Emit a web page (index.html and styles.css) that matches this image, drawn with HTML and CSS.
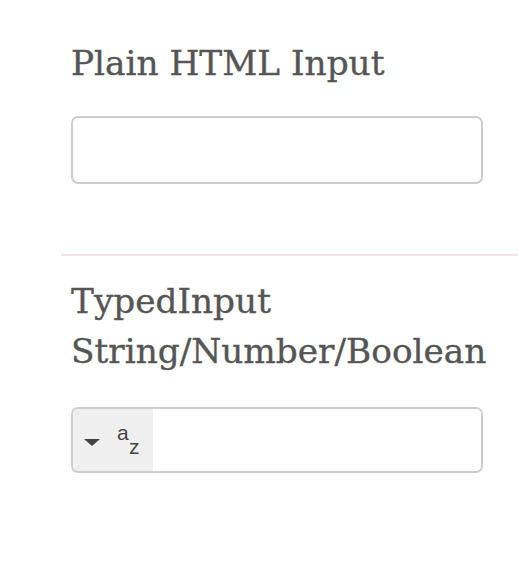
FILE: index.html
```html
<!DOCTYPE html>
<html>
<head>
<meta charset="utf-8">
<link rel="stylesheet" href="styles.css">
</head>
<body>
<div class="page">
  <section class="row first">
    <h3 class="title">Plain HTML Input</h3>
    <input class="field" type="text">
  </section>
  <hr class="divider">
  <section class="row second">
    <h3 class="title">TypedInput<br>String/Number/Boolean</h3>
    <div class="typed">
      <div class="type-btn">
        <svg class="caret" width="16" height="7" viewBox="0 0 16 7"><path d="M0 0 H16 L8 7 Z" fill="#444"/></svg>
        <span class="az"><span class="a">a</span><span class="z">z</span></span>
      </div>
      <input class="typed-field" type="text">
    </div>
  </section>
</div>
</body>
</html>
```
FILE: styles.css
```css
html, body {
  margin: 0;
  padding: 0;
  background: #fff;
}
.page {
  padding: 38px 0 0 61px;
}
.row {
  padding-left: 10px;
  padding-right: 35px;
}
.title {
  margin: 0;
  font-family: "DejaVu Serif", serif;
  font-weight: normal;
  font-size: 34.3px;
  line-height: 50px;
  color: #555;
  -webkit-text-stroke: 0.35px #555;
  white-space: nowrap;
}
.field {
  display: block;
  box-sizing: border-box;
  width: 412px;
  height: 68px;
  margin: 28px 0 0 0;
  border: 2px solid #ccc;
  border-radius: 7px;
  background: #fff;
  outline: none;
}
.divider {
  border: none;
  border-top: 2px solid #f3e2e6;
  margin: 70px 0 20px 0;
}
.typed {
  box-sizing: border-box;
  width: 412px;
  height: 66px;
  margin-top: 31px;
  border: 2px solid #ccc;
  border-radius: 7px;
  display: flex;
  overflow: hidden;
}
.type-btn {
  width: 80px;
  background: #efefef;
  display: flex;
  align-items: flex-start;
  box-sizing: border-box;
}
.caret {
  display: block;
  margin: 30px 0 0 11px;
}
.az {
  margin-left: 15px;
  position: relative;
  width: 28px;
  height: 62px;
  font-family: "Liberation Sans", sans-serif;
  font-size: 21px;
  line-height: 12px;
  color: #444;
}
.az .a {
  position: absolute;
  left: 2px;
  top: 18px;
}
.az .z {
  position: absolute;
  left: 14px;
  top: 32px;
}
.typed-field {
  flex: 1;
  border: none;
  outline: none;
  background: #fff;
}
```
